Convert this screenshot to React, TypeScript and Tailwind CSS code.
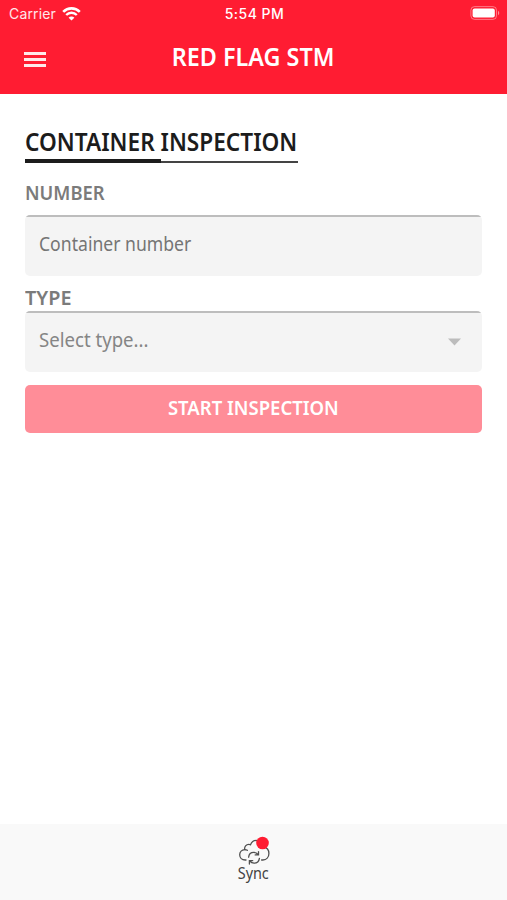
import type { ReactNode } from "react";

interface FieldProps {
  label: ReactNode;
  children: ReactNode;
}

function StatusBar() {
  return (
    <div className="grid h-7 grid-cols-3 items-center pr-[7px] pl-[9px] font-['Inter',sans-serif] text-[14px] leading-none text-white">
      <div className="flex items-center gap-[6px]">
        <span className="tracking-[0.15px] text-white/90">Carrier</span>
        <svg className="-mt-px" width="19" height="14" viewBox="0 0 19 14" fill="none" stroke="white">
          <path d="M1.2 4.8a11.7 11.7 0 0 1 16.6 0" strokeWidth="2.6" />
          <path d="M4.2 8a7.5 7.5 0 0 1 10.6 0" strokeWidth="2.4" />
          <path d="M9.5 13.6 6.6 10.7a4 4 0 0 1 5.8 0z" fill="white" stroke="none" />
        </svg>
      </div>
      <span className="text-center font-medium tracking-[0.5px]">5:54 PM</span>
      <svg className="-mt-[2px] justify-self-end" width="30" height="14" viewBox="0 0 30 14">
        <rect x="0.9" y="0.6" width="25.6" height="12.8" rx="3.6" fill="none" stroke="white" strokeOpacity="0.4" />
        <rect x="2.6" y="2.4" width="22.2" height="9.2" rx="2" fill="white" />
        <path d="M28 4.8c1.7.7 1.7 3.7 0 4.4z" fill="white" fillOpacity="0.5" />
      </svg>
    </div>
  );
}

function Field({ label, children }: FieldProps) {
  return (
    <div>
      <div className="flex h-[23px] items-center text-[20px] leading-none font-semibold text-[#7b7b7b]">{label}</div>
      {children}
    </div>
  );
}

function SyncIcon() {
  return (
    <svg width="34" height="30" viewBox="0 0 34 30" fill="none" stroke="#505050" strokeWidth="1.3" strokeLinecap="round">
      <path d="M9 25H8.2C5 25 2.7 22.7 2.7 19.8c0-2.9 2.2-5 5-5.2-.5-2.9 1.5-5.2 4.1-5.2.6 0 1.2.1 1.7.4C14.6 7 16.7 5.4 19.2 5.4c4 0 6.9 3 7.2 6.7 3.3.4 5.5 3 5.5 6.3 0 3.7-2.5 6.4-6 6.6H24.6" />
      <path d="M7.7 14.6c1 0 1.9.2 2.7.7" />
      <path d="M11.6 22.2c.3-2.9 2.5-4.9 5.2-4.9 1.7 0 3.2.8 4.2 2.2M21.5 16.6v3.3h-3.3M22.4 23.4c-.4 2.8-2.6 4.8-5.3 4.8-1.7 0-3.2-.8-4.2-2.2M12.4 29v-3.3h3.3" />
      <circle cx="25.5" cy="8" r="6.3" fill="#ff1c32" stroke="none" />
    </svg>
  );
}

export default function App() {
  return (
    <div className="flex h-[900px] w-[507px] flex-col bg-white font-['Noto_Sans',sans-serif]">
      <header className="h-[94px] bg-[#ff1c32]">
        <StatusBar />
        <div className="grid h-[60px] grid-cols-[1fr_auto_1fr] items-center">
          <button aria-label="Menu" className="mt-[3px] ml-6 flex w-[22px] flex-col gap-[3px]">
            <span className="h-[3px] bg-white/90" />
            <span className="h-[3px] bg-white/90" />
            <span className="h-[3px] bg-white/90" />
          </button>
          <h1 className="mb-[3px] scale-x-[.935] text-[25px] leading-none font-semibold text-white">RED FLAG STM</h1>
        </div>
      </header>

      <main className="flex-1 px-[25px] pt-[30px]">
        <div className="flex h-[39px] w-[273px] flex-col">
          <h2 className="h-[35px] origin-left scale-x-[.87] text-[26px] leading-[34px] font-semibold whitespace-nowrap text-[#1c1c1c]">
            CONTAINER INSPECTION
          </h2>
          <div className="flex h-1 items-end">
            <div className="h-1 w-[136px] bg-[#1c1c1c]" />
            <div className="mb-[0.5px] h-[1.5px] flex-1 bg-[#444]" />
          </div>
        </div>

        <div className="mt-[18px]">
          <Field label={<span className="origin-left scale-x-[.92]">NUMBER</span>}>
            <div className="mt-[11px] h-[61px] overflow-hidden rounded-[5px] bg-[#f4f4f4]">
              <div className="h-[2px] bg-[#bdbdbd]" />
              <div className="px-[14px]">
                <span className="inline-block origin-left scale-x-[.88] text-[20px] leading-[54px] text-[#757575]">
                  Container number
                </span>
              </div>
            </div>
          </Field>
        </div>

        <div className="mt-[10px]">
          <Field label={<span className="origin-left scale-x-[.99]">TYPE</span>}>
            <div className="mt-[2px] h-[61px] overflow-hidden rounded-[5px] bg-[#f4f4f4]">
              <div className="h-[2px] bg-[#bdbdbd]" />
              <div className="flex justify-between pr-[21px] pl-[14px]">
                <span className="inline-block origin-left scale-x-[.93] text-[20px] leading-[54px] text-[#858585]">
                  Select type...
                </span>
                <svg className="mt-[25px]" width="13" height="8" viewBox="0 0 13 8">
                  <path d="M0 .5h13l-6.5 7z" fill="#bcbcbc" />
                </svg>
              </div>
            </div>
          </Field>
        </div>

        <button className="mt-[13px] flex h-[48px] w-full items-center justify-center rounded-[5px] bg-[#ff8d98] pb-[3px]">
          <span className="scale-x-[.925] text-[20px] leading-none font-semibold text-white">START INSPECTION</span>
        </button>
      </main>

      <nav className="flex h-[76px] flex-col items-center bg-[#f9f9f9] pt-[11px]">
        <SyncIcon />
        <span className="-mt-px scale-x-90 text-[16px] leading-[18px] text-[#444]">Sync</span>
      </nav>
    </div>
  );
}
